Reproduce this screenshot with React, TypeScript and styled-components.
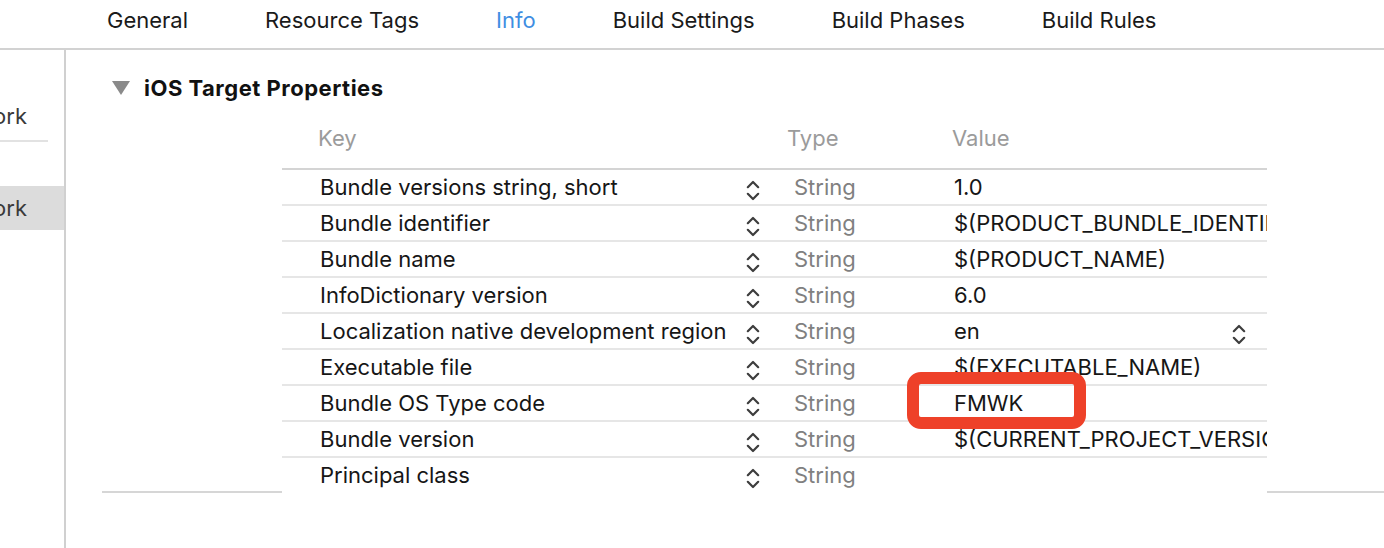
import React from "react";
import styled, { createGlobalStyle } from "styled-components";

const GlobalStyle = createGlobalStyle`
  html, body {
    margin: 0;
    padding: 0;
    background: #ffffff;
  }
  body {
    font-family: Inter, "Open Sans", "Liberation Sans", sans-serif;
    -webkit-font-smoothing: antialiased;
  }
`;

const Page = styled.div`
  width: 1384px;
  height: 548px;
  overflow: hidden;
  display: flex;
  flex-direction: column;
  background: #ffffff;
`;

const TabBar = styled.div`
  height: 50px;
  flex-shrink: 0;
  display: flex;
  align-items: center;
  gap: 77px;
  padding: 0 0 8px 107px;
  box-sizing: border-box;
  border-bottom: 2px solid #d2d2d2;
`;

const Tab = styled.div<{ active?: boolean }>`
  font-size: 22px;
  line-height: 24px;
  color: ${({ active }) => (active ? "#3f8ee2" : "#1a1a1a")};
  white-space: nowrap;
`;

const Body = styled.div`
  flex: 1;
  display: flex;
  min-height: 0;
`;

const Sidebar = styled.div`
  width: 64px;
  flex-shrink: 0;
  border-right: 2px solid #d0d0d0;
  padding-top: 44px;
  display: flex;
  flex-direction: column;
`;

const SideItem = styled.div<{ selected?: boolean }>`
  height: 44px;
  display: flex;
  align-items: center;
  justify-content: flex-end;
  padding-right: 37px;
  overflow: hidden;
  background: ${({ selected }) => (selected ? "#dcdcdc" : "transparent")};
  color: #3a3a3a;
  font-size: 22px;
  span {
    flex-shrink: 0;
    white-space: nowrap;
  }
`;

const SideSeparator = styled.div`
  width: 48px;
  height: 2px;
  margin: 2px 0 44px;
  background: #e2e2e2;
`;

const Main = styled.div`
  flex: 1;
  min-width: 0;
  padding-left: 36px;
`;

const Section = styled.div`
  border-bottom: 2px solid #d6d6d6;
`;

const SectionHeader = styled.div`
  display: flex;
  align-items: center;
  gap: 14px;
  padding: 26px 0 0 10px;
  height: 24px;
`;

const Triangle = styled.div`
  width: 0;
  height: 0;
  border-left: 9px solid transparent;
  border-right: 9px solid transparent;
  border-top: 14px solid #8a8a8a;
`;

const SectionTitle = styled.div`
  font-size: 22px;
  line-height: 24px;
  font-weight: 700;
  letter-spacing: 0.5px;
  color: #111111;
`;

const Table = styled.div`
  position: relative;
  z-index: 1;
  margin: 18px 0 -3px 180px;
  width: 985px;
  background: #ffffff;
`;

const columns = "458px 34px 174px 319px";

const HeaderRow = styled.div`
  display: grid;
  grid-template-columns: ${columns};
  padding: 8px 0 18px;
  border-bottom: 2px solid #d4d4d4;
  font-size: 22px;
  line-height: 24px;
  color: #9b9b9b;
`;

const HeaderCell = styled.div<{ pad: number }>`
  padding-left: ${({ pad }) => pad}px;
`;

const Row = styled.div<{ last?: boolean }>`
  display: grid;
  grid-template-columns: ${columns};
  height: 34px;
  border-bottom: 2px solid ${({ last }) => (last ? "transparent" : "#e6e6e6")};
  font-size: 22px;
  line-height: 24px;
`;

const KeyCell = styled.div`
  padding-left: 38px;
  display: flex;
  align-items: center;
  color: #161616;
  white-space: nowrap;
  overflow: hidden;
`;

const ChevronCell = styled.div`
  display: flex;
  align-items: flex-end;
  padding: 0 0 2px 6px;
`;

const TypeCell = styled.div`
  padding-left: 20px;
  display: flex;
  align-items: center;
  color: #808080;
`;

const ValueCell = styled.div`
  position: relative;
  min-width: 0;
  padding-left: 6px;
  display: flex;
  align-items: center;
  color: #161616;
`;

const ValueText = styled.div`
  flex: 1;
  min-width: 0;
  overflow: hidden;
  white-space: nowrap;
`;

const ValueChevron = styled.div`
  align-self: flex-end;
  padding: 0 21px 2px 0;
  display: flex;
`;

const Highlight = styled.div`
  position: absolute;
  left: -41px;
  top: -14px;
  width: 179px;
  height: 57px;
  box-sizing: border-box;
  border: 12px solid #ee4129;
  border-radius: 14px;
  pointer-events: none;
`;

const Chevrons = () => (
  <svg width="14" height="23" viewBox="0 0 14 23" fill="none">
    <path
      d="M1.8 8.2 L7 3 L12.2 8.2 M1.8 14.8 L7 20 L12.2 14.8"
      stroke="#3d3d3d"
      strokeWidth="2.2"
      strokeLinecap="round"
      strokeLinejoin="round"
    />
  </svg>
);

const tabs = [
  "General",
  "Resource Tags",
  "Info",
  "Build Settings",
  "Build Phases",
  "Build Rules",
];

type Entry = {
  key: string;
  value: string;
  picker?: boolean;
  marked?: boolean;
};

const entries: Entry[] = [
  { key: "Bundle versions string, short", value: "1.0" },
  { key: "Bundle identifier", value: "$(PRODUCT_BUNDLE_IDENTIFIER)" },
  { key: "Bundle name", value: "$(PRODUCT_NAME)" },
  { key: "InfoDictionary version", value: "6.0" },
  { key: "Localization native development region", value: "en", picker: true },
  { key: "Executable file", value: "$(EXECUTABLE_NAME)" },
  { key: "Bundle OS Type code", value: "FMWK", marked: true },
  { key: "Bundle version", value: "$(CURRENT_PROJECT_VERSION)" },
  { key: "Principal class", value: "" },
];

export default function App() {
  return (
    <>
      <GlobalStyle />
      <Page>
        <TabBar>
          {tabs.map((t) => (
            <Tab key={t} active={t === "Info"}>
              {t}
            </Tab>
          ))}
        </TabBar>
        <Body>
          <Sidebar>
            <SideItem>
              <span>Framework</span>
            </SideItem>
            <SideSeparator />
            <SideItem selected>
              <span>Framework</span>
            </SideItem>
          </Sidebar>
          <Main>
            <Section>
              <SectionHeader>
                <Triangle />
                <SectionTitle>iOS Target Properties</SectionTitle>
              </SectionHeader>
              <Table>
                <HeaderRow>
                  <HeaderCell pad={36}>Key</HeaderCell>
                  <HeaderCell pad={0} />
                  <HeaderCell pad={13}>Type</HeaderCell>
                  <HeaderCell pad={4}>Value</HeaderCell>
                </HeaderRow>
                {entries.map((e, i) => (
                  <Row key={e.key} last={i === entries.length - 1}>
                    <KeyCell>{e.key}</KeyCell>
                    <ChevronCell>
                      <Chevrons />
                    </ChevronCell>
                    <TypeCell>String</TypeCell>
                    <ValueCell>
                      <ValueText>{e.value}</ValueText>
                      {e.picker && (
                        <ValueChevron>
                          <Chevrons />
                        </ValueChevron>
                      )}
                      {e.marked && <Highlight />}
                    </ValueCell>
                  </Row>
                ))}
              </Table>
            </Section>
          </Main>
        </Body>
      </Page>
    </>
  );
}
